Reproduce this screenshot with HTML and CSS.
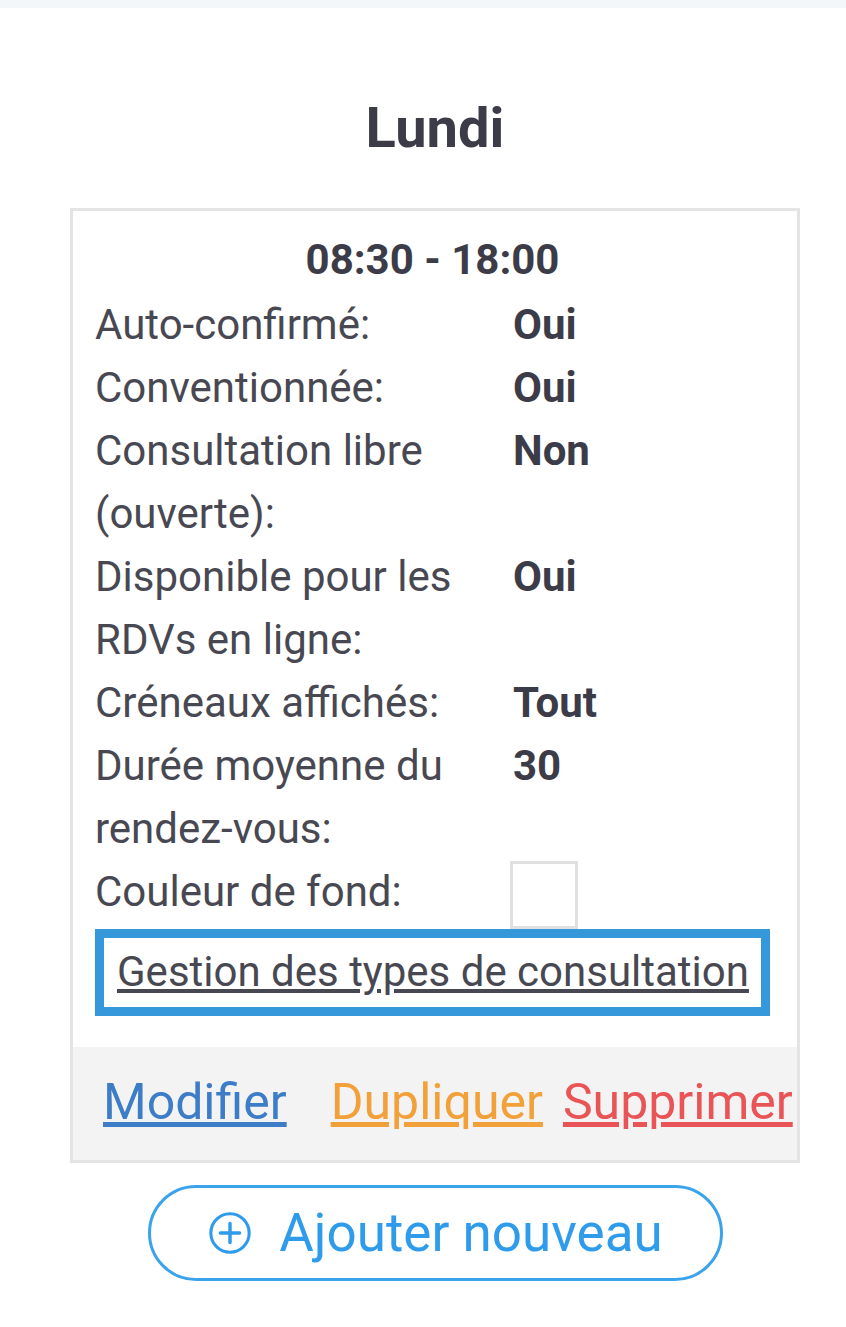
FILE: index.html
```html
<!DOCTYPE html>
<html lang="fr">
<head>
    <meta charset="UTF-8">
    <meta name="viewport" content="width=device-width, initial-scale=1.0">
    <title>Lundi - Plages horaires</title>
    <link rel="stylesheet" href="styles.css">
</head>
<body>
    <div class="topbar"></div>

    <div class="day">
        <h2 class="day-title">Lundi</h2>

        <div class="slot-card">
            <div class="slot-body">
                <div class="slot-time">08:30 - 18:00</div>

                <div class="slot-info">
                    <div class="label">Auto-confirmé:</div>
                    <div class="value">Oui</div>

                    <div class="label">Conventionnée:</div>
                    <div class="value">Oui</div>

                    <div class="label">Consultation libre (ouverte):</div>
                    <div class="value">Non</div>

                    <div class="label">Disponible pour les RDVs en ligne:</div>
                    <div class="value">Oui</div>

                    <div class="label">Créneaux affichés:</div>
                    <div class="value">Tout</div>

                    <div class="label">Durée moyenne du rendez-vous:</div>
                    <div class="value">30</div>

                    <div class="label">Couleur de fond:</div>
                    <div class="value"><span class="swatch"></span></div>
                </div>

                <div class="types-link">
                    <a href="#">Gestion des types de consultation</a>
                </div>
            </div>

            <div class="slot-actions">
                <a href="#" class="edit">Modifier</a>
                <a href="#" class="duplicate">Dupliquer</a>
                <a href="#" class="delete">Supprimer</a>
            </div>
        </div>

        <button class="add-btn">
            <svg class="add-icon" viewBox="0 0 24 24" width="46" height="46">
                <circle cx="12" cy="12" r="10" fill="none" stroke="currentColor" stroke-width="1.6"/>
                <path d="M12 7v10M7 12h10" stroke="currentColor" stroke-width="1.8" stroke-linecap="round"/>
            </svg>
            Ajouter nouveau
        </button>
    </div>
</body>
</html>
```

FILE: styles.css
```css
body {
    margin: 0;
    font-family: Roboto, "Liberation Sans", Arial, sans-serif;
    color: #484852;
    background: #fff;
}

.topbar {
    height: 8px;
    background: #f3f7fa;
}

.day {
    width: 730px;
    margin-left: 70px;
    display: flex;
    flex-direction: column;
    align-items: center;
}

.day-title {
    margin: 88px 0 48px;
    font-size: 56px;
    line-height: 64px;
    font-weight: 700;
    color: #3c3c48;
}

.slot-card {
    align-self: stretch;
    border: 3px solid #e4e4e4;
    background: #fff;
}

.slot-body {
    padding: 16px 27px 31px 22px;
}

.slot-time {
    text-align: center;
    font-size: 42px;
    line-height: 66px;
    font-weight: 700;
    color: #3c3c48;
}

.slot-info {
    display: grid;
    grid-template-columns: 418px 1fr;
    font-size: 42px;
    line-height: 63px;
}

.label {
    padding-right: 20px;
}

.value {
    font-weight: 700;
    color: #3c3c48;
}

.swatch {
    display: block;
    width: 62px;
    height: 62px;
    border: 3px solid #e0e0e0;
    margin: 1px 0 0 -3px;
}

.types-link {
    border: 9px solid #3498db;
    padding: 4px 0 5px 13px;
    font-size: 42px;
    line-height: 60px;
}

.types-link a {
    color: #484852;
}

.slot-actions {
    background: #f3f3f3;
    padding: 25px 0 28px 30px;
    display: flex;
    font-size: 50px;
    line-height: 60px;
}

.slot-actions .edit { color: #3d7dc7; }
.slot-actions .duplicate { color: #f2a13a; margin-left: 44px; }
.slot-actions .delete { color: #e95457; margin-left: 20px; }

.add-btn {
    margin-top: 22px;
    display: flex;
    align-items: center;
    gap: 26px;
    width: 575px;
    height: 96px;
    justify-content: center;
    border: 3px solid #3aa3ec;
    border-radius: 48px;
    background: #fff;
    color: #2f9beb;
    font-family: Roboto, "Liberation Sans", Arial, sans-serif;
    font-size: 53px;
    cursor: pointer;
}

.add-icon {
    flex: none;
}
```
